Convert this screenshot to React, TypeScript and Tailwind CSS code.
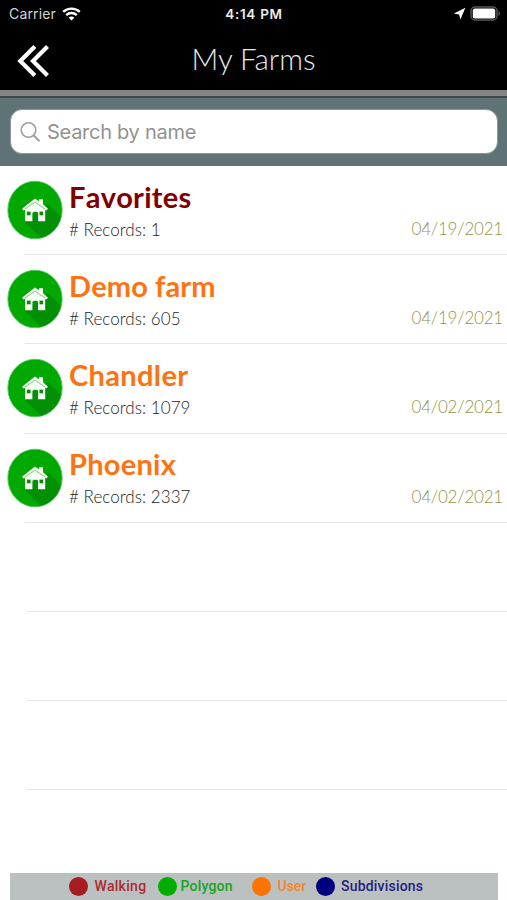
import React from "react";

type Farm = {
  name: string;
  records: number;
  date: string;
  color: string;
};

const farms: Farm[] = [
  { name: "Favorites", records: 1, date: "04/19/2021", color: "text-[#800000] tracking-[0.25px]" },
  { name: "Demo farm", records: 605, date: "04/19/2021", color: "text-[#ff7211] tracking-[0.1px]" },
  { name: "Chandler", records: 1079, date: "04/02/2021", color: "text-[#ff7211] tracking-[0.35px]" },
  { name: "Phoenix", records: 2337, date: "04/02/2021", color: "text-[#ff7211] tracking-[0.25px]" },
];

const legend = [
  { label: "Walking", dot: "bg-[#a51d21]", text: "text-[#a92b30] tracking-[0.3px]", box: "w-[89px] gap-[7px]" },
  { label: "Polygon", dot: "bg-[#00ad00]", text: "text-[#16a51c] tracking-[0.2px]", box: "w-[94px] gap-[4px]" },
  { label: "User", dot: "bg-[#ff7300]", text: "text-[#f2832f]", box: "w-[64.5px] gap-[7px]" },
  { label: "Subdivisions", dot: "bg-[#00007f]", text: "text-[#26207f] tracking-[0.2px]", box: "w-[110px] gap-[6px]" },
];

function StatusBar() {
  return (
    <div className="grid h-[27px] grid-cols-3 items-center pl-[9px] pr-[6px] text-white">
      <div className="flex items-center gap-[6px]">
        <span className="font-['Inter',sans-serif] text-[14px] tracking-[0.15px] text-[#d4d4d4]">Carrier</span>
        <svg width="19" height="14" viewBox="0 0 19 14" fill="none" stroke="currentColor" strokeWidth="2.4">
          <path d="M1.2 4.9C5.8 0.5 13.2 0.5 17.8 4.9" />
          <path d="M4.2 8.1C7.2 5.3 11.8 5.3 14.8 8.1" />
          <path d="M9.5 13.4L6.6 10.5C8.2 9.1 10.8 9.1 12.4 10.5Z" fill="currentColor" stroke="none" />
        </svg>
      </div>
      <div className="pr-[2px] pt-px text-center font-['Inter',sans-serif] text-[13.5px] font-semibold tracking-[0.7px] text-[#ededed]">4:14 PM</div>
      <div className="flex items-center justify-end gap-[4px]">
        <svg width="13" height="13" viewBox="0 0 13 13" fill="currentColor">
          <path d="M12.4 0.8L7.4 12.4L6.1 7.4L0.8 6.5Z" />
        </svg>
        <svg width="31" height="15" viewBox="0 0 31 15">
          <rect x="1" y="1" width="26" height="13" rx="4" fill="none" stroke="#565656" strokeWidth="1.5" />
          <rect x="2.8" y="2.5" width="22.4" height="10" rx="2" fill="white" />
          <path d="M28.5 5C30.4 5.8 30.4 9.2 28.5 10Z" fill="#565656" />
        </svg>
      </div>
    </div>
  );
}

function HouseIcon() {
  return (
    <svg className="shrink-0" width="56" height="60" viewBox="0 0 56 60">
      <defs>
        <clipPath id="disc">
          <ellipse cx="28" cy="30" rx="27" ry="28.6" />
        </clipPath>
      </defs>
      <ellipse cx="28" cy="30" rx="27" ry="28.6" fill="#00a800" />
      <path d="M41 24L60 43L47 62H38L17 41Z" fill="#008f05" clipPath="url(#disc)" />
      <ellipse cx="28" cy="30" rx="27.2" ry="28.8" fill="none" stroke="#35bd3c" strokeWidth="0.8" />
      <g fill="#f7fff5">
        <path d="M28 18.5L32 21.3V19.3H36V24.2L41 28.7L39.3 30.5L28 22.7L16.7 30.5L15 28.7Z" />
        <path d="M18 29.5L28 22.5L38.2 29.5V41.3H31.1V32.5H25.4V41.3H18Z" />
      </g>
      <g fill="#078d0b">
        <rect x="20" y="31.6" width="3.6" height="3.7" />
        <rect x="32.5" y="31.6" width="3.6" height="3.7" />
        <rect x="26.4" y="31.8" width="4" height="9.5" />
      </g>
      <path d="M18 29L28 22L38 29" fill="none" stroke="#72bd70" strokeWidth="0.8" />
    </svg>
  );
}

function FarmRow({ farm }: { farm: Farm }) {
  return (
    <li className="flex h-[89.2px] pl-[7px]">
      <div className="pt-[14px]">
        <HouseIcon />
      </div>
      <div className="flex flex-1 flex-col">
        <div className="flex flex-1 flex-col pl-[6px] pr-[4px]">
          <h2 className={`mt-[12.5px] text-[29px] leading-[36px] font-bold [font-kerning:none] ${farm.color}`}>{farm.name}</h2>
          <div className="flex items-center justify-between text-[17px] leading-[28px]">
            <span className="pt-px font-light tracking-[0.05px] text-[#1c1c1c]"># Records: {farm.records}</span>
            <span className="font-light tracking-[-0.22px] text-[#98944c]">{farm.date}</span>
          </div>
        </div>
        <div className="-ml-[38px] h-px bg-[#e6e6e6]" />
      </div>
    </li>
  );
}

export default function App() {
  return (
    <div className="flex h-[900px] w-[507px] flex-col overflow-hidden bg-white font-['Lato',sans-serif]">
      <header className="h-[90px] shrink-0 bg-black">
        <StatusBar />
        <div className="grid h-[63px] grid-cols-[60px_1fr_60px] items-center">
          <svg className="mt-[4px] ml-[17px]" width="33" height="34" viewBox="0 0 33 34" fill="none" stroke="white" strokeWidth="4.2">
            <path d="M17.8 2.5L3.3 17L17.8 31.5M30.5 2.5L16 17L30.5 31.5" />
          </svg>
          <h1 className="pt-px text-center text-[29.5px] font-light text-[#e8e8e8]">My Farms</h1>
        </div>
      </header>
      <div className="h-[6px] shrink-0 bg-[#858585]" />
      <div className="h-[2px] shrink-0 bg-[#3d484a]" />
      <div className="h-[68px] shrink-0 bg-[#5f7376] pr-[9px] pl-[10px] pt-[11px]">
        <div className="flex h-[45px] items-center rounded-[12px] border border-[#8b9899] bg-white pl-[9px]">
          <svg width="21" height="22" viewBox="0 0 21 22" fill="none" stroke="#a0a0a0" strokeWidth="1.6">
            <circle cx="8.5" cy="9" r="7.3" />
            <path d="M13.8 14.5L19.5 20.3" strokeWidth="2" />
          </svg>
          <span className="ml-[6px] font-['Inter',sans-serif] text-[20px] tracking-[-0.28px] text-[#929292]">Search by name</span>
        </div>
      </div>
      <ul className="flex-1">
        {farms.map((farm) => (
          <FarmRow key={farm.name} farm={farm} />
        ))}
        {[...Array(3)].map((_, i) => (
          <li key={i} className="flex h-[89.2px] items-end pl-[26px]">
            <div className="h-px flex-1 bg-[#e6e6e6]" />
          </li>
        ))}
      </ul>
      <footer className="mr-[9px] ml-[10px] flex h-[27px] shrink-0 items-center bg-[#bbc1c0] pl-[58.5px]">
        {legend.map((item) => (
          <div key={item.label} className={`flex shrink-0 items-center ${item.box}`}>
            <span className={`size-[19px] shrink-0 rounded-full ${item.dot}`} />
            <span className={`font-['Roboto',sans-serif] text-[14px] font-medium ${item.text}`}>{item.label}</span>
          </div>
        ))}
      </footer>
    </div>
  );
}
